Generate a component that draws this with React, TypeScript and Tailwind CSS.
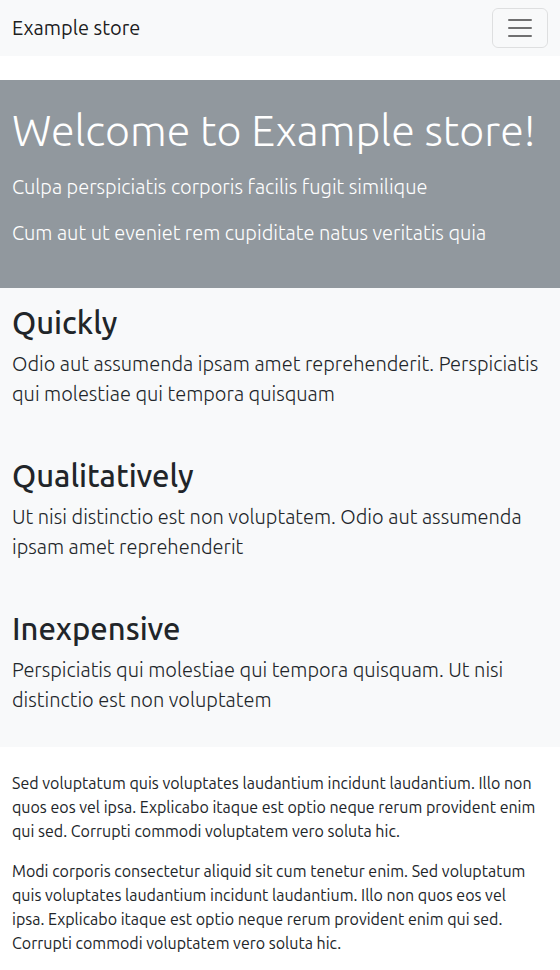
const features = [
  { title: 'Quickly', text: 'Odio aut assumenda ipsam amet reprehenderit. Perspiciatis qui molestiae qui tempora quisquam' },
  { title: 'Qualitatively', text: 'Ut nisi distinctio est non voluptatem. Odio aut assumenda ipsam amet reprehenderit' },
  { title: 'Inexpensive', text: 'Perspiciatis qui molestiae qui tempora quisquam. Ut nisi distinctio est non voluptatem' },
];

export default function App() {
  return (
    <div className="bg-white font-[Ubuntu,'Open_Sans','Noto_Sans',sans-serif] text-base text-[#212529]">
      <nav className="flex items-center justify-between bg-[#f8f9fa] px-3 py-2">
        <a href="#" className="text-xl leading-[30px] text-black/90">Example store</a>
        <button type="button" aria-label="Toggle navigation" className="rounded-md border border-black/10 px-3 py-1">
          <svg viewBox="0 0 30 30" className="size-[30px]" fill="none" stroke="#000" strokeOpacity="0.55" strokeWidth="2" strokeLinecap="round" strokeMiterlimit="10">
            <path d="M4 7h22M4 15h22M4 23h22" />
          </svg>
        </button>
      </nav>
      <header className="mt-6 bg-[#91989e] px-3 pt-6 pb-10 text-white">
        <h1 className="mb-4 text-[43px] leading-[52px] font-light">Welcome to Example store!</h1>
        <p className="mb-4 text-xl leading-[30px] font-light">Culpa perspiciatis corporis facilis fugit similique</p>
        <p className="text-xl leading-[30px] font-light">Cum aut ut eveniet rem cupiditate natus veritatis quia</p>
      </header>
      <section className="flex flex-col gap-12 bg-[#f8f9fa] px-3 pt-4 pb-8">
        {features.map((f) => (
          <div key={f.title}>
            <h2 className="mb-2 text-[31px] leading-[37px] font-medium">{f.title}</h2>
            <p className="text-xl leading-[30px] font-light">{f.text}</p>
          </div>
        ))}
      </section>
      <main className="flex flex-col gap-4 pt-6 pr-5 pb-4 pl-3">
        <p>Sed voluptatum quis voluptates laudantium incidunt laudantium. Illo non quos eos vel ipsa. Explicabo itaque est optio neque rerum provident enim qui sed. Corrupti commodi voluptatem vero soluta hic.</p>
        <p>Modi corporis consectetur aliquid sit cum tenetur enim. Sed voluptatum quis voluptates laudantium incidunt laudantium. Illo non quos eos vel ipsa. Explicabo itaque est optio neque rerum provident enim qui sed. Corrupti commodi voluptatem vero soluta hic.</p>
      </main>
    </div>
  );
}
